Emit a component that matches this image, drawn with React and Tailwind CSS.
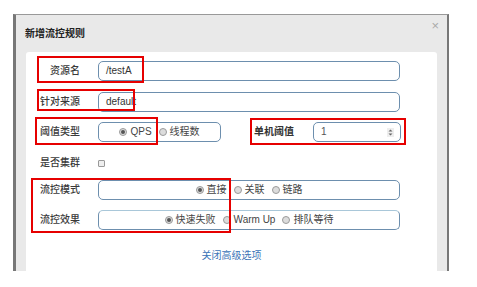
import React from "react";

const Radio = ({ checked, label }) => (
  <span className="flex items-center gap-[3px]">
    <span className="w-[8px] h-[8px] rounded-full border border-[#9a9a9a] bg-[#dcdcdc] flex items-center justify-center">
      {checked && <span className="w-[4px] h-[4px] rounded-full bg-[#555]" />}
    </span>
    <span>{label}</span>
  </span>
);

const Label = ({ children }) => (
  <div className="w-[54px] text-right font-medium text-[#3a3a3a] shrink-0">{children}</div>
);

const boxCls =
  "h-[20px] border border-[#6d8fae] rounded-[5px] bg-white flex items-center";

const App = () => (
  <div className="relative w-[477px] h-[287px] bg-white overflow-hidden text-[10px] leading-none text-[#333] font-['Liberation_Sans','Noto_Sans_CJK_SC',sans-serif]">
    <div className="ml-[13px] mt-[14px] w-[436px] h-[257px] bg-[#e9e9e9] border-l-[3px] border-r-[2px] border-t border-l-[#777] border-r-[#777] border-t-[#999] flex flex-col">
      <div className="relative h-[37px] shrink-0 flex items-center pl-[9px] pt-[1px]">
        <span className="font-bold text-[#222]">新增流控规则</span>
        <span className="absolute right-[8px] top-[4px] text-[13px] text-[#aaa]">×</span>
      </div>
      <div className="mx-[10px] flex-1 bg-white rounded-t-[3px] flex flex-col pt-[9px]">
        <div className="flex items-center">
          <Label>资源名</Label>
          <div className={`${boxCls} ml-[18px] w-[302px] pl-[7px]`}>/testA</div>
        </div>
        <div className="flex items-center mt-[11px]">
          <Label>针对来源</Label>
          <div className={`${boxCls} ml-[18px] w-[302px] pl-[7px]`}>default</div>
        </div>
        <div className="flex items-center mt-[10px]">
          <Label>阈值类型</Label>
          <div className={`${boxCls} ml-[18px] w-[123px] justify-center gap-[7px] text-[#444]`}>
            <Radio checked label="QPS" />
            <Radio label="线程数" />
          </div>
          <div className="ml-[33px] font-bold text-[#333]">单机阈值</div>
          <div className={`${boxCls} ml-[19px] w-[88px] pl-[7px] pr-[6px] justify-between text-[#555]`}>
            <span>1</span>
            <svg width="7" height="9" viewBox="0 0 7 9" className="bg-[#eee]">
              <path d="M1.5 3.5 L3.5 1.5 L5.5 3.5 Z" fill="#666" />
              <path d="M1.5 5.5 L3.5 7.5 L5.5 5.5 Z" fill="#666" />
            </svg>
          </div>
        </div>
        <div className="flex items-center mt-[11px] h-[20px]">
          <Label>是否集群</Label>
          <span className="ml-[18px] w-[7px] h-[7px] border border-[#999] bg-[#eee] rounded-[1px]" />
        </div>
        <div className="flex items-center mt-[7px]">
          <Label>流控模式</Label>
          <div className={`${boxCls} ml-[18px] w-[302px] justify-center gap-[7px] text-[#444]`}>
            <Radio checked label="直接" />
            <Radio label="关联" />
            <Radio label="链路" />
          </div>
        </div>
        <div className="flex items-center mt-[10px]">
          <Label>流控效果</Label>
          <div className={`${boxCls} ml-[18px] w-[302px] justify-center gap-[7px] text-[#444] border-t-[#a9c7d9]`}>
            <Radio checked label="快速失败" />
            <Radio label="Warm Up" />
            <Radio label="排队等待" />
          </div>
        </div>
        <div className="mt-[21px] text-center text-[#3a73b7]">关闭高级选项</div>
      </div>
    </div>

    <div className="absolute left-[37px] top-[56px] w-[107px] h-[27px] border-2 border-[#e60000]" />
    <div className="absolute left-[37px] top-[89px] w-[98px] h-[22px] border-2 border-[#e60000]" />
    <div className="absolute left-[35px] top-[117px] w-[123px] h-[28px] border-2 border-[#e60000]" />
    <div className="absolute left-[250px] top-[118px] w-[156px] h-[27px] border-2 border-[#e60000]" />
    <div className="absolute left-[31px] top-[178px] w-[200px] h-[55px] border-2 border-[#e60000]" />
  </div>
);

export default App;
